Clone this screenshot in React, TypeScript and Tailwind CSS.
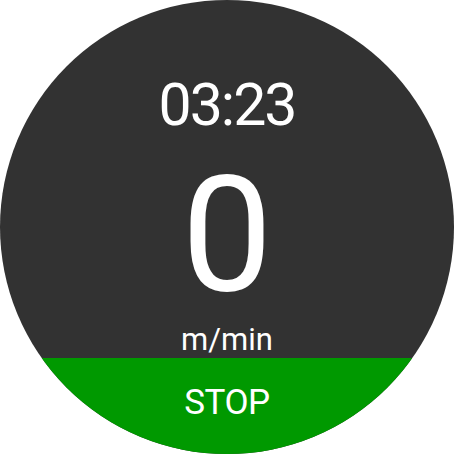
export default function App() {
  return (
    <div className="w-[454px] h-[454px] bg-white">
      <div
        className="w-[454px] h-[454px] rounded-full overflow-hidden bg-[#323232] flex flex-col text-white"
        style={{ fontFamily: "Roboto, 'Noto Sans', sans-serif" }}
      >
        <div className="h-[358px] flex flex-col items-center">
          <div className="mt-[75px] text-[59px] leading-none tracking-[-2px]">03:23</div>
          <div className="mt-[26px] text-[162px] leading-[150px]">0</div>
          <div className="mt-[14px] text-[31px] leading-none">m/min</div>
        </div>
        <div className="flex-1 bg-[#009900] flex justify-center">
          <div className="mt-[27px] text-[35px] leading-none tracking-[-0.5px]">STOP</div>
        </div>
      </div>
    </div>
  );
}
